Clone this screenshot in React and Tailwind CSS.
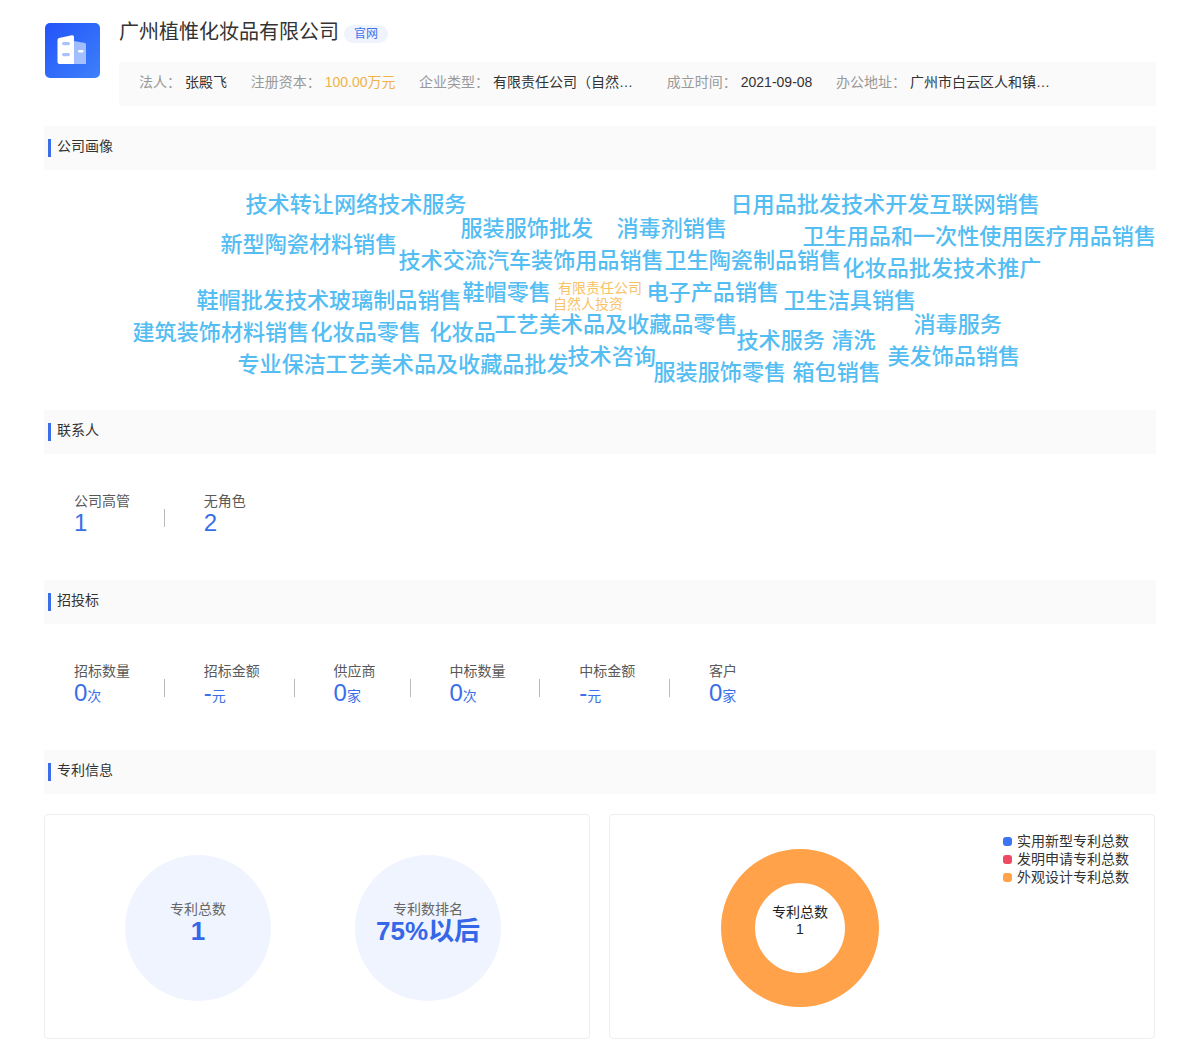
const FONT = '"Liberation Sans","Noto Sans CJK SC",sans-serif';

const words = [
  ['技术转让网络技术服务', 246, 205], ['服装服饰批发', 461, 229], ['消毒剂销售', 617, 229],
  ['日用品批发技术开发互联网销售', 731, 205], ['卫生用品和一次性使用医疗用品销售', 803, 237],
  ['新型陶瓷材料销售', 221, 245], ['技术交流汽车装饰用品销售', 399, 261], ['卫生陶瓷制品销售', 665, 261],
  ['化妆品批发技术推广', 843, 269], ['鞋帽批发技术玻璃制品销售', 197, 301], ['鞋帽零售', 463, 293],
  ['电子产品销售', 647, 293], ['卫生洁具销售', 784, 301], ['建筑装饰材料销售', 133, 333],
  ['化妆品零售', 311, 333], ['化妆品', 430, 333], ['工艺美术品及收藏品零售', 495, 325],
  ['技术服务', 737, 341], ['清洗', 832, 341], ['消毒服务', 914, 325], ['专业保洁', 238, 365],
  ['工艺美术品及收藏品批发', 326, 365], ['技术咨询', 568, 357], ['服装服饰零售', 654, 373],
  ['箱包销售', 793, 373], ['美发饰品销售', 888, 357],
];
const orange = [['有限责任公司', 558, 288], ['自然人投资', 553, 304]];

function SectionHeader({ title }) {
  return (
    <div className="flex h-11 items-center bg-[#fafafa] pl-1">
      <span className="h-[18px] w-[3px] bg-[#3a6ee8]" />
      <span className="ml-1.5 -translate-y-[2px] text-sm leading-[18px] text-[#333]">{title}</span>
    </div>
  );
}

function Info({ label, value, valueClass = 'text-[#333]', truncate }) {
  return (
    <div className="flex shrink-0 items-center gap-1 text-sm leading-5">
      <span className="shrink-0 text-[#999]">{label}</span>
      <span className={`${valueClass} ${truncate || ''}`}>{value}</span>
    </div>
  );
}

function Stat({ label, value, unit, first, last }) {
  return (
    <div className="flex items-center">
      <div className={first ? '' : 'pl-[38.8px]'}>
        <div className="text-sm leading-5 text-[#595959]">{label}</div>
        <div className="flex h-6 items-baseline text-[#3a6ee8]">
          <span className="text-2xl leading-6">{value}</span>
          {unit && <span className="text-sm leading-6">{unit}</span>}
        </div>
      </div>
      {!last && <div className="ml-[34px] mt-[10px] h-[18px] w-px bg-[#bbb]" />}
    </div>
  );
}

function Bubble({ label, value }) {
  return (
    <div className="flex h-[146px] w-[146px] flex-col items-center rounded-full bg-[#eff4fe] pt-[45px]">
      <div className="text-sm leading-[18px] text-[#666]">{label}</div>
      <div className="text-[26px] font-bold leading-[26px] text-[#3567e8]">{value}</div>
    </div>
  );
}

function Legend({ color, label }) {
  return (
    <div className="flex h-[18px] items-center gap-[5px] text-sm text-[#333]">
      <span className={`h-[9px] w-[9px] rounded-[3px] ${color}`} />
      <span>{label}</span>
    </div>
  );
}

export default function App() {
  return (
    <div className="h-[1061px] w-[1200px] bg-white px-11 pt-[15px]" style={{ fontFamily: FONT }}>
      <div className="flex">
        <div className="ml-px mt-2 h-[55px] w-[55px] shrink-0 rounded-[5px] bg-gradient-to-br from-[#2352f8] to-[#3f80fb]">
          <svg width="55" height="55" viewBox="0 0 55 55">
            <path d="M29 18 40 20Q41 20.2 41 21.5V41H29Z" fill="#fff" fillOpacity=".55" />
            <path d="M14 15 27 12.2Q29 12 29 14V41H14.5Q12.5 41 12.5 39V17Q12.5 15.4 14 15Z" fill="#fff" />
            <rect x="17" y="19" width="8" height="3.2" rx="1.6" fill="#a9c2fb" />
            <rect x="17" y="30" width="8" height="3.2" rx="1.6" fill="#a9c2fb" />
            <rect x="33" y="27" width="5.5" height="2.6" rx="1.3" fill="#fff" />
          </svg>
        </div>
        <div className="ml-[19px] min-w-0 flex-1">
          <div className="flex h-[32px] items-center">
            <h1 className="translate-y-px text-xl font-normal leading-8 text-[#333]">广州植惟化妆品有限公司</h1>
            <span className="ml-[5px] mt-[6px] flex h-[18px] w-[44px] items-center justify-center rounded-[9px] bg-[#eef3fc] text-xs text-[#3a74e8]">官网</span>
          </div>
          <div className="mt-[15px] flex h-11 items-center gap-[23.65px] bg-[#fafafa] pb-1 pl-5">
            <Info label="法人：" value="张殿飞" />
            <Info label="注册资本：" value="100.00万元" valueClass="text-[#f0b24a]" />
            <Info label="企业类型：" value="有限责任公司（自然人投资或控股）" truncate="w-[150px] truncate" />
            <Info label="成立时间：" value="2021-09-08" />
            <Info label="办公地址：" value="广州市白云区人和镇鹤亭村" truncate="w-[140px] truncate" />
          </div>
        </div>
      </div>

      <div className="mt-5">
        <SectionHeader title="公司画像" />
        <div className="relative h-[240px]">
          {words.map(([t, x, y]) => (
            <span key={t + x} className="absolute whitespace-nowrap text-[22.1px] font-medium leading-[22px] text-[#54bdf2]" style={{ left: x - 44.5, top: y - 181 }}>{t}</span>
          ))}
          {orange.map(([t, x, y]) => (
            <span key={t} className="absolute whitespace-nowrap text-sm leading-[14px] text-[#f8c266]" style={{ left: x - 44, top: y - 177 }}>{t}</span>
          ))}
        </div>
      </div>

      <SectionHeader title="联系人" />
      <div className="flex h-[126px] items-start pl-[30px] pt-[37px]">
        <Stat first label="公司高管" value="1" />
        <Stat last label="无角色" value="2" />
      </div>

      <SectionHeader title="招投标" />
      <div className="flex h-[126px] items-start pl-[30px] pt-[37px]">
        <Stat first label="招标数量" value="0" unit="次" />
        <Stat label="招标金额" value="-" unit="元" />
        <Stat label="供应商" value="0" unit="家" />
        <Stat label="中标数量" value="0" unit="次" />
        <Stat label="中标金额" value="-" unit="元" />
        <Stat last label="客户" value="0" unit="家" />
      </div>

      <SectionHeader title="专利信息" />
      <div className="mt-5 grid grid-cols-[546px_546px] gap-[19px]">
        <div className="flex h-[225px] items-center gap-[84px] rounded-[4px] border border-[#eee] pl-[80px] pt-[2px]">
          <Bubble label="专利总数" value="1" />
          <Bubble label="专利数排名" value="75%以后" />
        </div>
        <div className="relative h-[225px] rounded-[4px] border border-[#eee]">
          <svg className="absolute left-[110px] top-[33px]" width="160" height="160" viewBox="0 0 160 160">
            <circle cx="80" cy="80" r="62" fill="none" stroke="#ffa24a" strokeWidth="34" />
          </svg>
          <div className="absolute left-[162px] top-[89px] w-14 text-center text-sm leading-[17px] text-[#222]">
            <div>专利总数</div>
            <div>1</div>
          </div>
          <div className="absolute left-[393px] top-[17px]">
            <Legend color="bg-[#3d74f6]" label="实用新型专利总数" />
            <Legend color="bg-[#ee4a63]" label="发明申请专利总数" />
            <Legend color="bg-[#ffa24a]" label="外观设计专利总数" />
          </div>
        </div>
      </div>
    </div>
  );
}
